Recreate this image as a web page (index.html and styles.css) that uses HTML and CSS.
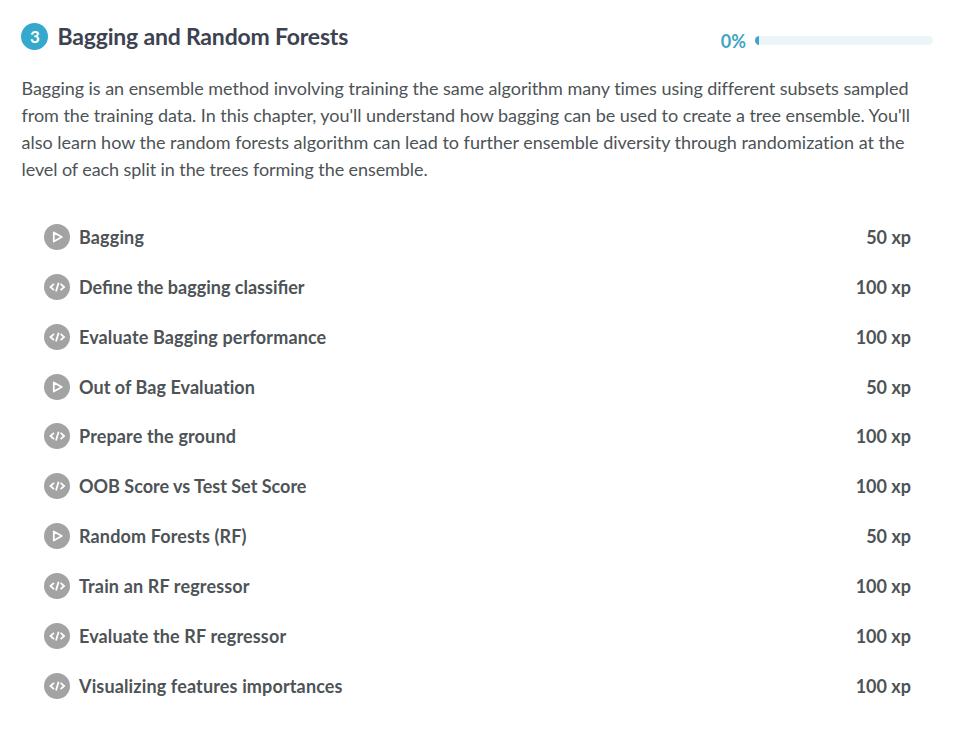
FILE: index.html
```html
<!DOCTYPE html>
<html lang="en">
<head>
<meta charset="utf-8">
<title>Bagging and Random Forests</title>
<link rel="stylesheet" href="styles.css">
</head>
<body>
<svg class="sprite" width="0" height="0">
<symbol id="play" viewBox="0 0 26 26"><circle cx="13" cy="13" r="13" fill="#a3a3a3"/><path d="M9.8 8.5v9l8-4.5z" fill="none" stroke="#fff" stroke-width="1.8" stroke-linejoin="round"/></symbol>
<symbol id="code" viewBox="0 0 26 26"><circle cx="13" cy="13" r="13" fill="#a3a3a3"/><path d="M10 9.8 6.5 13l3.5 3.2M16.6 9.8 20.1 13l-3.5 3.2M14.6 8.8l-2.6 8.6" fill="none" stroke="#fff" stroke-width="1.8"/></symbol>
</svg>
<main class="chapter">
<header class="head">
<span class="number">3</span>
<h1 class="title">Bagging and Random Forests</h1>
<div class="progress"><span class="percent">0%</span><div class="bar"><div class="fill"></div></div></div>
</header>
<p class="desc"><span class="line">Bagging is an ensemble method involving training the same algorithm many times using different subsets sampled</span> <span class="line">from the training data. In this chapter, you'll understand how bagging can be used to create a tree ensemble. You'll</span> <span class="line">also learn how the random forests algorithm can lead to further ensemble diversity through randomization at the</span> <span class="line">level of each split in the trees forming the ensemble.</span></p>
<ul class="list">
<li class="row"><svg class="icon"><use href="#play"/></svg><span class="name">Bagging</span><span class="xp">50 xp</span></li>
<li class="row"><svg class="icon"><use href="#code"/></svg><span class="name">Define the bagging classifier</span><span class="xp">100 xp</span></li>
<li class="row"><svg class="icon"><use href="#code"/></svg><span class="name">Evaluate Bagging performance</span><span class="xp">100 xp</span></li>
<li class="row"><svg class="icon"><use href="#play"/></svg><span class="name">Out of Bag Evaluation</span><span class="xp">50 xp</span></li>
<li class="row"><svg class="icon"><use href="#code"/></svg><span class="name">Prepare the ground</span><span class="xp">100 xp</span></li>
<li class="row"><svg class="icon"><use href="#code"/></svg><span class="name">OOB Score vs Test Set Score</span><span class="xp">100 xp</span></li>
<li class="row"><svg class="icon"><use href="#play"/></svg><span class="name">Random Forests (RF)</span><span class="xp">50 xp</span></li>
<li class="row"><svg class="icon"><use href="#code"/></svg><span class="name">Train an RF regressor</span><span class="xp">100 xp</span></li>
<li class="row"><svg class="icon"><use href="#code"/></svg><span class="name">Evaluate the RF regressor</span><span class="xp">100 xp</span></li>
<li class="row"><svg class="icon"><use href="#code"/></svg><span class="name">Visualizing features importances</span><span class="xp">100 xp</span></li>
</ul>
</main>
</body>
</html>
```
FILE: styles.css
```css
* { box-sizing: border-box; }
body { margin: 0; background: #fff; font-family: Lato, sans-serif; color: #4d5356; }
.sprite { display: block; }
.chapter { padding: 21px 23px 0 21px; }
.head { display: flex; align-items: center; height: 31px; }
.number { width: 27px; height: 27px; border-radius: 50%; background: #35a9cb; color: #fff; font-size: 17px; font-weight: 700; line-height: 27px; text-align: center; padding-left: 1px; }
.title { margin: 0 0 2px 9.5px; font-size: 23px; line-height: 30px; font-weight: 700; color: #3d4251; letter-spacing: -0.19px; }
.progress { display: flex; align-items: center; margin-left: auto; padding-top: 8px; }
.percent { font-size: 18px; line-height: 22px; font-weight: 700; color: #3fa5c4; }
.bar { width: 178px; height: 9px; margin-left: 9px; border-radius: 5px; background: #ebf4f7; overflow: hidden; }
.fill { width: 4px; height: 9px; background: #3fa5c4; }
.desc { margin: 23px 0 0 0.5px; font-size: 18px; line-height: 27px; white-space: nowrap; font-variant-ligatures: none; }
.line { display: block; letter-spacing: -0.045px; }
.line:nth-child(3) { letter-spacing: -0.01px; }
.line:nth-child(4) { letter-spacing: -0.085px; }
.list { list-style: none; margin: 29px 22px 0 23px; padding: 0; }
.row { display: flex; align-items: center; height: 49.88px; }
.icon { width: 26px; height: 26px; }
.name { margin-left: 9px; font-size: 18px; font-weight: 700; letter-spacing: 0.14px; }
.row:nth-child(2) .name { letter-spacing: 0; }
.row:nth-child(4) .name { letter-spacing: 0.05px; font-variant-ligatures: none; }
.row:nth-child(6) .name { letter-spacing: 0; }
.xp { margin-left: auto; font-size: 18px; font-weight: 700; }
```
